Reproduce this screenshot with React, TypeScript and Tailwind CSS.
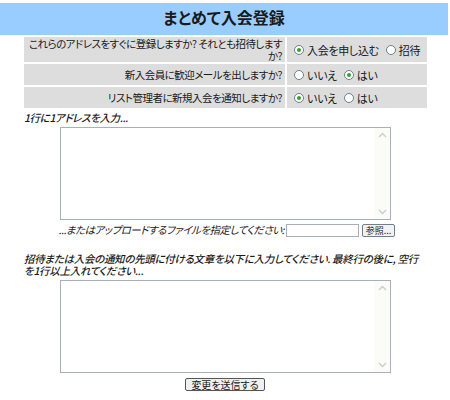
import React from 'react';

const font = "font-['Noto_Sans_CJK_JP','Noto_Sans',sans-serif] [font-feature-settings:'palt']";

function Radio({ checked, label }: { checked?: boolean; label: string }) {
  return (
    <span className="inline-flex items-center gap-[3px] mr-[7px] whitespace-nowrap">
      <span className="w-[10px] h-[10px] rounded-full border border-[#6f7f8f] bg-white flex items-center justify-center">
        {checked && <span className="w-[4px] h-[4px] rounded-full bg-[#2fa52f]" />}
      </span>
      <span>{label}</span>
    </span>
  );
}

function Chevron({ up }: { up?: boolean }) {
  return (
    <svg width="9" height="6" viewBox="0 0 9 6" className="text-[#c8cdd2]">
      <path
        d={up ? 'M1 5 L4.5 1.5 L8 5' : 'M1 1 L4.5 4.5 L8 1'}
        fill="none"
        stroke="currentColor"
        strokeWidth="1.4"
      />
    </svg>
  );
}

function TextBox() {
  return (
    <div className="ml-[60px] w-[331px] h-[93px] border border-[#a7b0bb] flex bg-white">
      <textarea className="flex-1 resize-none outline-none bg-white" />
      <div className="w-[16px] bg-[#fbfbf7] flex flex-col items-center justify-between py-[4px]">
        <Chevron up />
        <Chevron />
      </div>
    </div>
  );
}

export default function App() {
  return (
    <div className={`w-[450px] h-[400px] bg-white text-[#1a1a1a] overflow-hidden pt-[3px] ${font}`}>
      <div className="w-[448px] h-[32px] bg-[#99ccff] text-center font-bold text-[16px] leading-[20px] pt-[4px]">
        まとめて入会登録
      </div>

      <div className="ml-[24px] w-[403px] mt-[2px] grid grid-cols-[261px_1fr] gap-[2px] text-[10.5px] leading-[12px] tracking-[-0.5px]">
        <div className="bg-[#dddddd] h-[25px] text-right pl-[2px] pr-[3px] pt-[1px]">
          これらのアドレスをすぐに登録しますか? それとも招待しますか?
        </div>
        <div className="bg-[#dddddd] h-[25px] flex items-center pl-[7px] text-[11px] tracking-[-0.3px]">
          <Radio checked label="入会を申し込む" />
          <Radio label="招待" />
        </div>

        <div className="bg-[#dddddd] h-[21px] flex items-center justify-end pr-[3px]">
          新入会員に歓迎メールを出しますか?
        </div>
        <div className="bg-[#dddddd] h-[21px] flex items-center pl-[7px] text-[11px] tracking-[-0.3px]">
          <Radio label="いいえ" />
          <Radio checked label="はい" />
        </div>

        <div className="bg-[#dddddd] h-[21px] flex items-center justify-end pr-[3px]">
          リスト管理者に新規入会を通知しますか?
        </div>
        <div className="bg-[#dddddd] h-[21px] flex items-center pl-[7px] text-[11px] tracking-[-0.3px]">
          <Radio checked label="いいえ" />
          <Radio label="はい" />
        </div>
      </div>

      <div className="ml-[24px] mt-[3px] italic font-medium text-[10.5px] leading-[13px] tracking-[-0.4px]">
        1行に1アドレスを入力...
      </div>

      <div className="mt-[3px]">
        <TextBox />
      </div>

      <div className="flex items-center mt-[3px] h-[14px] text-[10.5px] italic tracking-[-0.5px]">
        <span className="w-[286px] text-right pr-[2px]">...またはアップロードするファイルを指定してください:</span>
        <span className="w-[73px] h-[13px] border border-[#a7b0bb] bg-white" />
        <span className="ml-[3px] w-[33px] h-[13px] border border-[#6f7f8f] rounded-[2px] bg-[#f2f2f2] text-[9px] leading-[11px] text-center not-italic tracking-normal">
          参照...
        </span>
      </div>

      <div className="ml-[24px] w-[398px] mt-[16px] italic font-medium text-[10.5px] leading-[12px] tracking-[-0.3px]">
        招待または入会の通知の先頭に付ける文章を以下に入力してください. 最終行の後に, 空行を1行以上入れてください...
      </div>

      <div className="mt-[3px]">
        <TextBox />
      </div>

      <div className="flex justify-center mt-[5px]">
        <button className="w-[80px] h-[13px] border border-[#555] rounded-[2px] bg-[#f0f0f0] text-[10px] leading-[11px]">
          変更を送信する
        </button>
      </div>
    </div>
  );
}
